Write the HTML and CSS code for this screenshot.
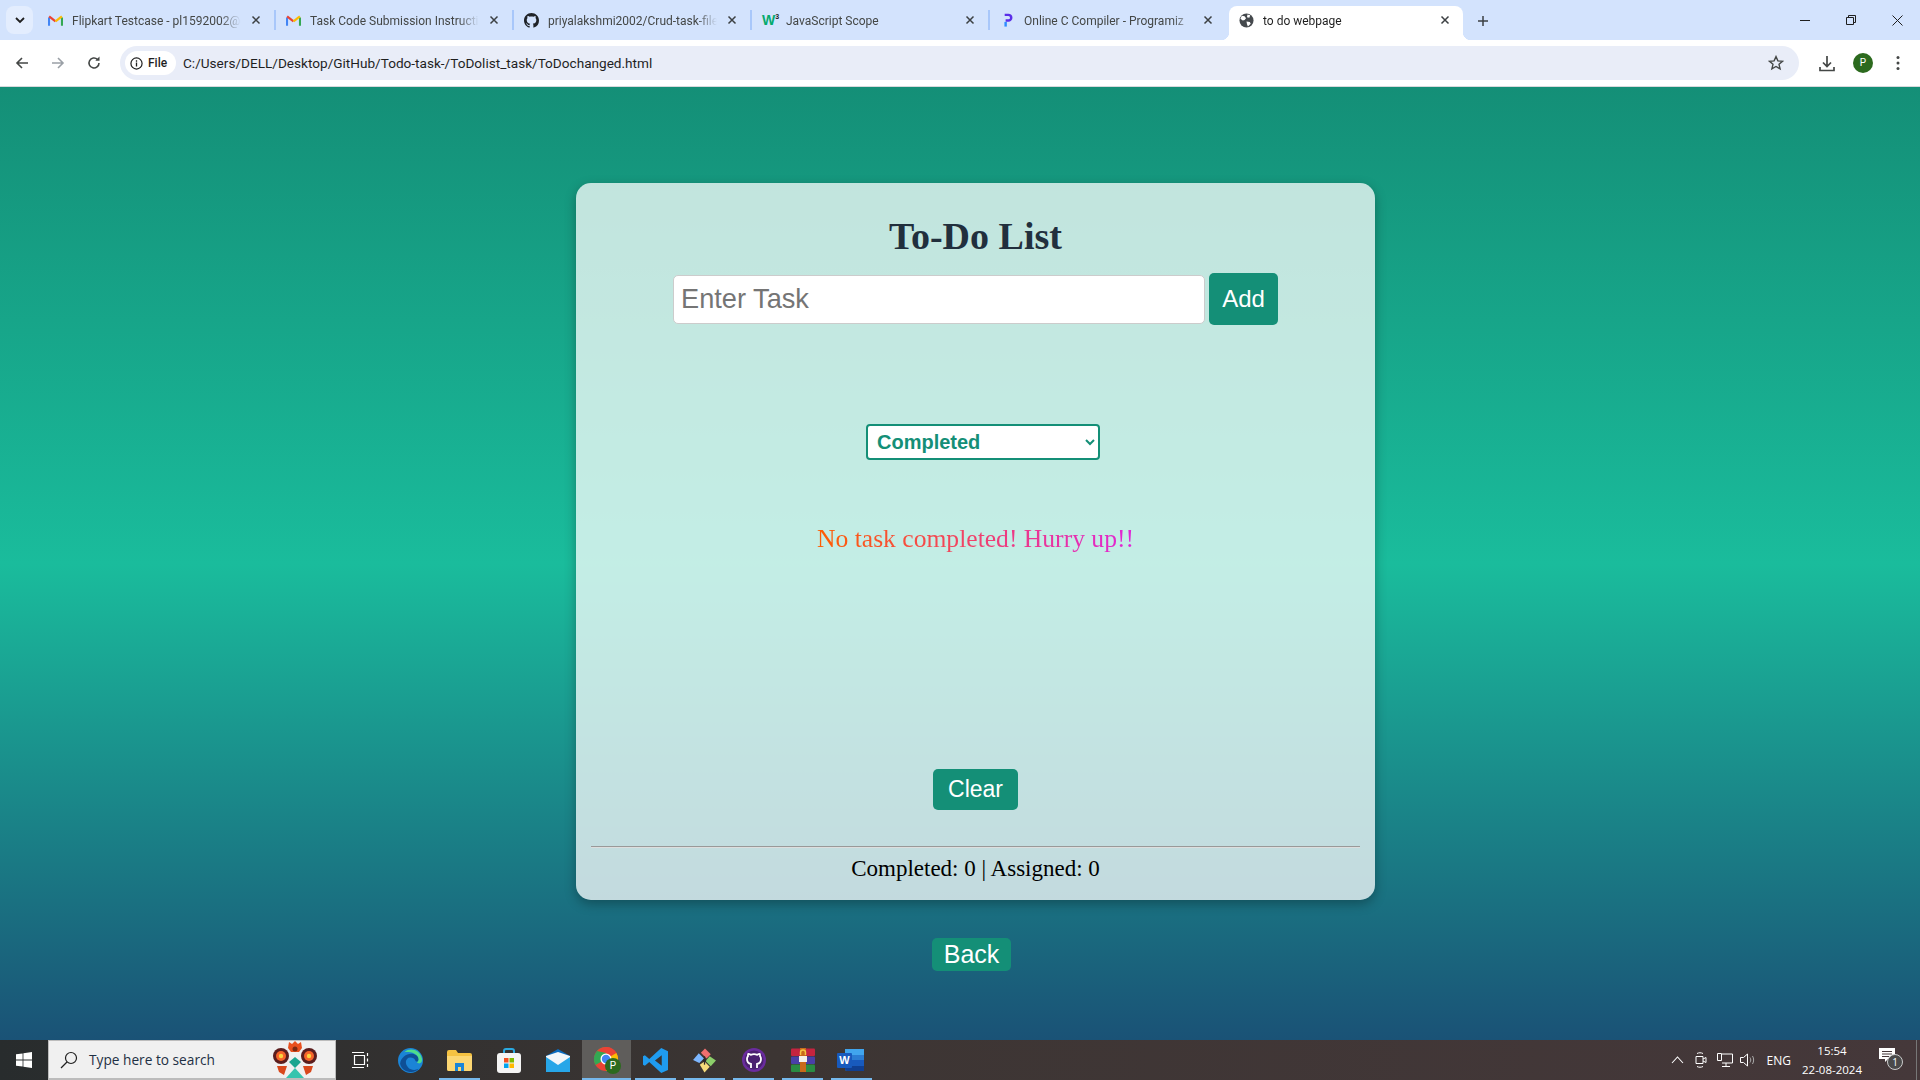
FILE: index.html
```html
<!DOCTYPE html>
<html lang="en">
<head>
  <meta charset="UTF-8" />
  <title>to do webpage</title>
  <link rel="stylesheet" href="styles.css">
</head>
<body>
  <svg class="defs" aria-hidden="true">
    <symbol id="close" viewBox="0 0 10 10"><path d="M1.5 1.5l7 7M8.5 1.5l-7 7" stroke="#3c4043" stroke-width="1.5" fill="none"/></symbol>
    <symbol id="gmail" viewBox="0 0 16 13">
      <path d="M1 12V3.2" stroke="#4285f4" stroke-width="2.4" fill="none"/>
      <path d="M15 12V3.2" stroke="#34a853" stroke-width="2.4" fill="none"/>
      <path d="M1.2 2.2L8 7.4" stroke="#ea4335" stroke-width="2.4" fill="none"/>
      <path d="M14.8 2.2L8 7.4" stroke="#fbbc04" stroke-width="2.4" fill="none"/>
    </symbol>
  </svg>

  <div class="tabstrip">
    <div class="tab-search">
      <svg width="10" height="7" viewBox="0 0 10 7"><path d="M1 1l4 4 4-4" stroke="#1f1f1f" stroke-width="1.8" fill="none"/></svg>
    </div>
    <div class="tab">
      <svg class="favicon" viewBox="0 0 16 13"><use href="#gmail"/></svg>
      <span class="tab-title">Flipkart Testcase - pl1592002@g</span>
      <svg class="tab-close" viewBox="0 0 10 10"><use href="#close"/></svg>
    </div>
    <div class="tab-sep"></div>
    <div class="tab">
      <svg class="favicon" viewBox="0 0 16 13"><use href="#gmail"/></svg>
      <span class="tab-title">Task Code Submission Instructio</span>
      <svg class="tab-close" viewBox="0 0 10 10"><use href="#close"/></svg>
    </div>
    <div class="tab-sep"></div>
    <div class="tab">
      <svg class="favicon" viewBox="0 0 16 16"><path fill="#1f2328" d="M8 0C3.58 0 0 3.58 0 8c0 3.54 2.29 6.53 5.47 7.59.4.07.55-.17.55-.38 0-.19-.01-.82-.01-1.49-2.01.37-2.53-.49-2.69-.94-.09-.23-.48-.94-.82-1.13-.28-.15-.68-.52-.01-.53.63-.01 1.08.58 1.23.82.72 1.21 1.87.87 2.33.66.07-.52.28-.87.51-1.07-1.78-.2-3.64-.89-3.64-3.95 0-.87.31-1.59.82-2.15-.08-.2-.36-1.02.08-2.12 0 0 .67-.21 2.2.82.64-.18 1.32-.27 2-.27s1.36.09 2 .27c1.53-1.04 2.2-.82 2.2-.82.44 1.1.16 1.92.08 2.12.51.56.82 1.27.82 2.15 0 3.07-1.87 3.75-3.65 3.95.29.25.54.73.54 1.48 0 1.07-.01 1.93-.01 2.2 0 .21.15.46.55.38A8.01 8.01 0 0016 8c0-4.42-3.58-8-8-8z"/></svg>
      <span class="tab-title">priyalakshmi2002/Crud-task-file</span>
      <svg class="tab-close" viewBox="0 0 10 10"><use href="#close"/></svg>
    </div>
    <div class="tab-sep"></div>
    <div class="tab">
      <span class="favicon w3-icon">W<sup>3</sup></span>
      <span class="tab-title">JavaScript Scope</span>
      <svg class="tab-close" viewBox="0 0 10 10"><use href="#close"/></svg>
    </div>
    <div class="tab-sep"></div>
    <div class="tab">
      <svg class="favicon" viewBox="0 0 16 16"><path d="M5 2h4a3 3 0 010 6H6" stroke="#5b2ee8" stroke-width="2.6" fill="none"/><path d="M6 9.5v5" stroke="#2f8cff" stroke-width="2.6"/></svg>
      <span class="tab-title">Online C Compiler - Programiz</span>
      <svg class="tab-close" viewBox="0 0 10 10"><use href="#close"/></svg>
    </div>
    <div class="tab tab-active">
      <svg class="favicon" viewBox="0 0 16 16"><circle cx="8" cy="8" r="7.5" fill="#45494d"/><path d="M3 3l3 .5 1.5 2L6 7.5l-2 .5-2.5-2zM9 1.5l3 1-1 2.5-2.5-.5zM8 9l3.5.5 1 2-3 3-1-2.5z" fill="#fff"/></svg>
      <span class="tab-title">to do webpage</span>
      <svg class="tab-close" viewBox="0 0 10 10"><use href="#close"/></svg>
    </div>
    <div class="new-tab">
      <svg width="12" height="12" viewBox="0 0 12 12"><path d="M6 1v10M1 6h10" stroke="#3c4043" stroke-width="1.5"/></svg>
    </div>
    <div class="window-controls">
      <svg width="10" height="10" viewBox="0 0 10 10"><path d="M0 5.5h10" stroke="#1f1f1f"/></svg>
      <svg width="10" height="10" viewBox="0 0 10 10"><path d="M.5 2.5h7v7h-7zM2.5 2.5v-2h7v7h-2" stroke="#1f1f1f" fill="none"/></svg>
      <svg width="11" height="11" viewBox="0 0 11 11"><path d="M.5.5l10 10M10.5.5l-10 10" stroke="#1f1f1f"/></svg>
    </div>
  </div>

  <div class="toolbar">
    <svg class="tool-icon" viewBox="0 0 16 16"><path d="M14 8H3M8 3L3 8l5 5" stroke="#444746" stroke-width="1.6" fill="none"/></svg>
    <svg class="tool-icon" viewBox="0 0 16 16"><path d="M2 8h11M8 3l5 5-5 5" stroke="#9aa0a6" stroke-width="1.6" fill="none"/></svg>
    <svg class="tool-icon" viewBox="0 0 16 16"><path d="M13 8a5 5 0 11-1.6-3.7" stroke="#444746" stroke-width="1.6" fill="none"/><path d="M13.5 1.5v4.2H9.3z" fill="#444746"/></svg>
    <div class="omnibox">
      <div class="file-chip">
        <svg width="13" height="13" viewBox="0 0 14 14"><circle cx="7" cy="7" r="6" stroke="#1f1f1f" stroke-width="1.3" fill="none"/><path d="M7 6v4.2M7 3.6v1.4" stroke="#1f1f1f" stroke-width="1.4"/></svg>
        <span>File</span>
      </div>
      <span class="url">C:/Users/DELL/Desktop/GitHub/Todo-task-/ToDolist_task/ToDochanged.html</span>
      <svg class="star" width="16" height="16" viewBox="0 0 16 16"><path d="M8 1.6l1.9 4.3 4.6.4-3.5 3 1.1 4.6L8 11.5l-4.1 2.4L5 9.3l-3.5-3 4.6-.4z" stroke="#444746" stroke-width="1.4" fill="none"/></svg>
    </div>
    <div class="toolbar-right">
      <svg width="16" height="17" viewBox="0 0 16 17"><path d="M8 1v10M4 7.5L8 11.500l4-4M1 12v3.500h14V12" stroke="#444746" stroke-width="1.700" fill="none"/></svg>
      <span class="avatar">P</span>
      <svg width="4" height="16" viewBox="0 0 4 16"><circle cx="2" cy="2.500" r="1.500" fill="#444746"/><circle cx="2" cy="8" r="1.500" fill="#444746"/><circle cx="2" cy="13.500" r="1.500" fill="#444746"/></svg>
    </div>
  </div>

  <main class="page">
    <section class="todo-card">
      <h1 class="todo-title">To-Do List</h1>
      <div class="input-row">
        <input class="task-input" type="text" placeholder="Enter Task">
        <button class="btn btn-add">Add</button>
      </div>
      <select class="filter">
        <option>Completed</option>
        <option>Assigned</option>
      </select>
      <p class="empty-msg"><span>No task completed! Hurry up!!</span></p>
      <button class="btn btn-clear">Clear</button>
      <hr class="divider">
      <p class="stats">Completed: 0 | Assigned: 0</p>
    </section>
    <button class="btn btn-back">Back</button>
  </main>

  <footer class="taskbar">
    <div class="start">
      <svg width="16" height="16" viewBox="0 0 16 16"><path fill="#fff" d="M0 2.300l6.600-.9v6.200H0zM7.400 1.300L16 0v7.600H7.400zM0 8.400h6.600v6.200L0 13.700zM7.400 8.400H16V16l-8.600-1.300z"/></svg>
    </div>
    <div class="search-box">
      <svg width="18" height="18" viewBox="0 0 18 18"><circle cx="11" cy="7" r="5.500" stroke="#1f1f1f" stroke-width="1.200" fill="none"/><path d="M7 11l-6 6" stroke="#1f1f1f" stroke-width="1.300"/></svg>
      <span class="search-text">Type here to search</span>
      <svg class="doodle" width="46" height="38" viewBox="0 0 46 38">
        <circle cx="9" cy="15" r="8" fill="#5b1d1d"/><circle cx="9" cy="15" r="5" fill="#f6642a"/><circle cx="9" cy="15" r="2.200" fill="#fbd33e"/>
        <circle cx="37" cy="15" r="8" fill="#5b1d1d"/><circle cx="37" cy="15" r="5" fill="#f6642a"/><circle cx="37" cy="15" r="2.200" fill="#fbd33e"/>
        <path d="M17 1l3 2 3-3 3 3 3-2 1 6-3 4h-8l-3-4z" fill="#e8501e"/><circle cx="23" cy="8" r="2.500" fill="#7a2a14"/>
        <path d="M23 16l6 5-6 6-6-6z" fill="#1aa58f"/><path d="M23 27l9 10H14z" fill="#35c4ae"/>
        <path d="M5 25h10l-3 9-5-3zM41 25H31l3 9 5-3z" fill="#d9481c"/>
      </svg>
    </div>
    <div class="task-item">
      <svg class="task-view" width="18" height="16" viewBox="0 0 18 16"><path d="M3.500 3.500h10v9h-10zM1 .5h12M1 15.500h12M16.500 1v3M16.500 6.500v3M16.500 12v3" stroke="#fff" stroke-width="1.200" fill="none"/></svg>
    </div>
    <div class="task-item">
      <svg width="25" height="25" viewBox="0 0 24 24"><circle cx="12" cy="12" r="12" fill="#1b84d6"/><path d="M2 15C3 7 12 3 18 7c3 2 3 6 0 6-2 0-1-4-6-4-5 0-6 6-2 10 2 2 6 3 10 1-4 5-16 4-18-5z" fill="#0e4f96"/><path d="M6 4c6-5 15-2 17 6 .8 4-2 6-5 4 3-2 2-7-3-9-4-1.500-7-1-9-1z" fill="#4fdc8c"/></svg>
    </div>
    <div class="task-item running">
      <svg width="25" height="22" viewBox="0 0 25 22"><path d="M0 3a2 2 0 012-2h7l2 3h12a2 2 0 012 2v14a2 2 0 01-2 2H2a2 2 0 01-2-2z" fill="#f5c242"/><path d="M0 7h25v13a2 2 0 01-2 2H2a2 2 0 01-2-2z" fill="#fcd773"/><path d="M8 22v-8h9v8h-3v-4h-3v4z" fill="#1a86d8"/></svg>
    </div>
    <div class="task-item">
      <svg width="24" height="25" viewBox="0 0 24 25"><path d="M7 7V3a2 2 0 012-2h6a2 2 0 012 2v4" stroke="#2aa9e0" stroke-width="2" fill="none"/><rect y="5" width="24" height="20" rx="3" fill="#f4f4f4"/><rect x="7" y="10" width="4.500" height="4.500" fill="#f25022"/><rect x="12.500" y="10" width="4.500" height="4.500" fill="#7fba00"/><rect x="7" y="15.500" width="4.500" height="4.500" fill="#00a4ef"/><rect x="12.500" y="15.500" width="4.500" height="4.500" fill="#ffb900"/></svg>
    </div>
    <div class="task-item">
      <svg width="24" height="23" viewBox="0 0 24 23"><path d="M12 0l12 7v16H0V7z" fill="#0a6cc0"/><path d="M0 8h24v15H0z" fill="#27a6e8"/><path d="M0 8l12 8 12-8v-1L12 3 0 7z" fill="#f2f6fa"/></svg>
    </div>
    <div class="task-item active">
      <svg width="26" height="26" viewBox="0 0 26 26"><circle cx="12" cy="12" r="12" fill="#ea4335"/><path d="M12 12L1.600 18A12 12 0 0112 0z" fill="#34a853"/><path d="M12 12l10.400-6A12 12 0 0112 24z" fill="#fbbc04"/><path d="M12 6h10.400A12 12 0 003 4z" fill="#ea4335"/><circle cx="12" cy="12" r="5.500" fill="#fff"/><circle cx="12" cy="12" r="4.200" fill="#4285f4"/></svg>
      <span class="profile-badge">P</span>
    </div>
    <div class="task-item running">
      <svg width="25" height="25" viewBox="0 0 24 24"><path d="M17.500 0L24 3v18l-6.500 3L6 13.500 1.800 17 0 16V8l1.800-1L6 10.500zM18 7l-6.500 5 6.500 5z" fill="#1f9cf0"/></svg>
    </div>
    <div class="task-item running">
      <svg width="25" height="25" viewBox="0 0 24 24"><path d="M12.500 .5l5.500 5.500-4 4-5.500-5.500z" fill="#ef6f6f"/><path d="M6.500 5l5 5-4.500 4.500L1 11.500z" fill="#7db7ff"/><path d="M17 8l6 4-5 5.500-5-5z" fill="#8ccf6a"/><path d="M7.500 16l4.500-3 5 5-5 5.500z" fill="#f6dc7b"/><circle cx="12" cy="12" r="1.600" fill="#2f2a28"/><path d="M12 8v8" stroke="#2f2a28" stroke-width="1.200"/></svg>
    </div>
    <div class="task-item running">
      <svg width="24" height="24" viewBox="0 0 24 24"><circle cx="12" cy="12" r="12" fill="#6a2c9e"/><circle cx="12" cy="12" r="9.500" fill="#4a2070"/><path d="M9 20v-4c-2.500-.5-4-2-4-5 0-1 .3-2 1-2.800-.2-.8 0-1.800.3-2.400.9 0 1.700.5 2.400 1a9 9 0 016.600 0c.7-.5 1.500-1 2.400-1 .3.600.5 1.600.3 2.400.7.800 1 1.800 1 2.800 0 3-1.500 4.500-4 5v4" stroke="#fff" stroke-width="1.800" fill="none"/></svg>
    </div>
    <div class="task-item running">
      <svg width="24" height="24" viewBox="0 0 24 24"><rect width="24" height="7.500" y=".5" rx="1" fill="#c5243f"/><rect width="24" height="7.500" y="8.500" rx="1" fill="#4a3fa8"/><rect width="24" height="7.500" y="16.500" rx="1" fill="#2a8c43"/><rect x="9" y="0" width="6" height="24" fill="#c86a1a"/><rect x="8" y="8" width="8" height="6" fill="#f6f1e6"/><path d="M9.500 7V4.500a2.500 2.500 0 015 0V7" stroke="#f5c242" stroke-width="1.500" fill="none"/></svg>
    </div>
    <div class="task-item running">
      <svg width="25" height="22" viewBox="0 0 25 22"><path d="M6 2a2 2 0 012-2h17v22H8a2 2 0 01-2-2z" fill="#2b7cd3"/><path d="M6 0h19v6H6z" fill="#41a5ee"/><path d="M6 11h19v6H6z" fill="#185abd"/><path d="M6 17h19v5H8a2 2 0 01-2-2z" fill="#103f91"/></svg>
      <span class="word-letter">W</span>
    </div>

    <div class="tray">
      <svg class="tray-chevron" width="13" height="8" viewBox="0 0 13 8"><path d="M1 7l5.500-6L12 7" stroke="#fff" stroke-width="1.100" fill="none"/></svg>
      <svg class="tray-cam" width="12" height="16" viewBox="0 0 12 16"><path d="M1 4.500h7v7H1zM8 7l3-1.500v5L8 9M2 1.500c2-1 4-1 6 0M2 14.500c2 1 4 1 6 0" stroke="#fff" fill="none"/></svg>
      <svg class="tray-net" width="16" height="14" viewBox="0 0 16 14"><path d="M5 1h10.500v9H5M.5.500h4v7h-4zM9 10v3M5 13.500h8" stroke="#fff" fill="none"/></svg>
      <svg class="tray-vol" width="16" height="14" viewBox="0 0 16 14"><path d="M.5 4.500h3l4-3.500v12l-4-3.500h-3z" stroke="#fff" fill="none"/><path d="M10 4.500c1 1.500 1 3.500 0 5M12.500 3c1.500 2.500 1.500 5.500 0 8" stroke="#aaa" fill="none"/></svg>
      <span class="tray-lang">ENG</span>
      <div class="clock"><span>15:54</span><span>22-08-2024</span></div>
      <div class="notify">
        <svg width="16" height="15" viewBox="0 0 16 15"><path d="M0 0h16v11H9l-3 3v-3H0z" fill="#fff"/><path d="M3 3.500h10M3 6h10M3 8.500h7" stroke="#45383a"/></svg>
        <span class="notify-count">1</span>
      </div>
      <div class="show-desktop"></div>
    </div>
  </footer>
</body>
</html>
```

FILE: styles.css
```css
* {
  box-sizing: border-box;
}
html, body {
  height: 100%;
}
body {
  margin: 0;
  display: flex;
  flex-direction: column;
  overflow: hidden;
  font-family: "Liberation Serif", serif;
}
.defs {
  display: none;
}

/* browser chrome */
.tabstrip {
  height: 40px;
  flex: none;
  display: flex;
  align-items: flex-end;
  background: #d3e3fd;
  font-family: Roboto, sans-serif;
  padding-left: 6px;
  color: #444746;
}
.tab-search {
  width: 27px;
  height: 28px;
  margin: 0 5px 6px 0;
  border-radius: 8px;
  background: #e3edfe;
  display: flex;
  align-items: center;
  justify-content: center;
}
.tab {
  width: 236px;
  height: 34px;
  padding: 0 10px 6px 10px;
  display: flex;
  align-items: center;
  position: relative;
}
.tab-sep {
  width: 2px;
  height: 20px;
  margin-bottom: 10px;
  background: #a8c7fa;
}
.favicon {
  width: 15px;
  height: 15px;
  flex: none;
  margin-right: 9px;
}
.w3-icon {
  font: bold 14px/15px "Liberation Sans", sans-serif;
  color: #04aa6d;
  white-space: nowrap;
}
.w3-icon sup {
  font-size: 7px;
  line-height: 0;
  color: #1f1f1f;
}
.tab-title {
  flex: 1;
  font-size: 12px;
  padding-top: 2px;
  white-space: nowrap;
  overflow: hidden;
  mask-image: linear-gradient(to right, #000 88%, transparent 100%);
}
.tab-close {
  width: 10px;
  height: 10px;
  flex: none;
  margin: 0 3px 0 10px;
}
.tab-active {
  width: 234px;
  margin-left: 3px;
  background: #fff;
  border-radius: 8px 8px 0 0;
  color: #1f1f1f;
}
/* concave corners either side of the open tab */
.tab-active::before,
.tab-active::after {
  content: "";
  position: absolute;
  bottom: 0;
  width: 8px;
  height: 8px;
}
.tab-active::before {
  left: -8px;
  background: radial-gradient(circle at 0 0, transparent 8px, #fff 8.5px);
}
.tab-active::after {
  right: -8px;
  background: radial-gradient(circle at 100% 0, transparent 8px, #fff 8.5px);
}
.new-tab {
  width: 12px;
  height: 12px;
  margin: 0 0 13px 14px;
  display: flex;
}
.window-controls {
  margin-left: auto;
  align-self: stretch;
  width: 137px;
  padding: 15px 17px 0 17px;
  display: flex;
  justify-content: space-between;
  align-items: flex-start;
}
.toolbar {
  height: 47px;
  flex: none;
  display: flex;
  align-items: center;
  gap: 20px;
  padding: 0 13px 0 14px;
  background: #fff;
  border-radius: 8px 8px 0 0;
  border-bottom: 1px solid #d7d9dc;
}
.tool-icon {
  width: 16px;
  height: 16px;
  flex: none;
}
.omnibox {
  width: 1679px;
  height: 34px;
  margin-left: -2px;
  flex: none;
  border-radius: 17px;
  background: #e9edf8;
  display: flex;
  align-items: center;
  padding: 0 15px 0 5px;
  font-family: Roboto, sans-serif;
  color: #1f1f1f;
}
.file-chip {
  width: 51px;
  height: 24px;
  border-radius: 12px;
  background: #fff;
  display: flex;
  align-items: center;
  gap: 5px;
  padding-left: 5px;
  font-size: 12px;
  font-weight: 500;
}
.url {
  font-size: 13.600px;
  margin-left: 7px;
}
.star {
  margin-left: auto;
}
.toolbar-right {
  display: flex;
  align-items: center;
  margin-left: 0;
  gap: 18px;
}
.avatar {
  width: 20px;
  height: 20px;
  margin-right: 5px;
  border-radius: 50%;
  background: #2c6a1e;
  color: #fff;
  font: 10px/20px Roboto, sans-serif;
  text-align: center;
}

/* the to-do page */
.page {
  flex: 1;
  min-height: 0;
  display: flex;
  flex-direction: column;
  align-items: flex-start;
  background: linear-gradient(#148f77, #1abc9c, #1a5276);
}
.todo-card {
  width: 799px;
  height: 717px;
  margin: 96px 0 0 576px;
  padding: 31px 15px 0;
  display: flex;
  flex-direction: column;
  align-items: center;
  background: rgba(255, 255, 255, 0.74);
  border-radius: 15px;
  box-shadow: 0 4px 12px rgba(0, 0, 0, 0.3);
}
.todo-title {
  margin: 0;
  font-size: 38px;
  line-height: 44px;
  font-weight: bold;
  color: #212f3d;
}
.input-row {
  margin-top: 15px;
  display: flex;
  align-items: center;
  gap: 4px;
}
.task-input {
  width: 532px;
  height: 49px;
  padding: 0 7px;
  border: 1px solid #ccc;
  border-radius: 5px;
  background: #fff;
  font: 27.200px "Liberation Sans", sans-serif;
}
.btn {
  border: none;
  background: #148f77;
  color: #fff;
  font-family: "Liberation Sans", sans-serif;
  font-size: 24px;
  border-radius: 5px;
  padding: 0;
}
.btn-add {
  width: 69px;
  height: 52px;
}
.filter {
  width: 234px;
  height: 36px;
  margin: 99px 0 0 15px;
  padding-left: 5px;
  border: 2px solid #148f77;
  border-radius: 4px;
  background: #fff;
  color: #148f77;
  font: bold 20px "Liberation Sans", sans-serif;
}
.empty-msg {
  margin: 61px 0 0;
  font-size: 25.600px;
  line-height: 36px;
}
.empty-msg span {
  display: inline-block;
  background: linear-gradient(90deg, #ff5e00, #e024d8);
  -webkit-background-clip: text;
  background-clip: text;
  color: transparent;
}
.btn-clear {
  width: 85px;
  height: 41px;
  margin-top: 212px;
  font-size: 23px;
}
.divider {
  width: 100%;
  margin: 36px 0 0;
  border: none;
  border-top: 1px solid #999;
  border-bottom: 1px solid #ddd;
}
.stats {
  margin: 7px 0 0;
  font-size: 23px;
  line-height: 28px;
  color: #000;
}
.btn-back {
  width: 79px;
  height: 33px;
  margin: 38px 0 0 932px;
  font-size: 25px;
}

/* windows taskbar */
.taskbar {
  height: 40px;
  flex: none;
  display: flex;
  align-items: stretch;
  background: linear-gradient(90deg, #282c2d, #3c3533 40%, #45383a);
  font-family: "Open Sans", sans-serif;
}
.start {
  width: 48px;
  display: flex;
  align-items: center;
  justify-content: center;
}
.search-box {
  width: 288px;
  margin-right: 1px;
  padding-left: 11px;
  display: flex;
  align-items: center;
  background: #f0f0f0;
  border: 1px solid #bcbcbc;
  border-bottom-width: 2px;
}
.search-text {
  margin-left: 11px;
  font-size: 13.700px;
  color: #1f3044;
}
.doodle {
  margin-left: auto;
  margin-right: 17px;
}
.task-item {
  width: 49px;
  display: flex;
  align-items: center;
  justify-content: center;
  position: relative;
}
.task-view {
  margin-right: 4px;
}
.running::after,
.active::after {
  content: "";
  position: absolute;
  left: 4px;
  right: 4px;
  bottom: 0;
  height: 2px;
  background: #76b9ed;
}
.active {
  background: #5f5d5b;
}
.active::after {
  left: 0;
  right: 0;
}
.profile-badge {
  position: absolute;
  left: 23px;
  top: 18px;
  width: 16px;
  height: 16px;
  border-radius: 50%;
  background: #2c6a1e;
  color: #fff;
  font: 10px/16px Roboto, sans-serif;
  text-align: center;
}
.word-letter {
  position: absolute;
  left: 10px;
  top: 13px;
  width: 15px;
  height: 15px;
  border-radius: 1px;
  background: #185abd;
  color: #fff;
  font: bold 11px/15px "Liberation Sans", sans-serif;
  text-align: center;
}
.tray {
  margin-left: auto;
  display: flex;
  align-items: center;
  color: #fff;
  font-size: 12px;
}
.tray-cam {
  margin-left: 11px;
}
.tray-net {
  margin-left: 10px;
}
.tray-vol {
  margin-left: 7px;
}
.tray-lang {
  margin-left: 11px;
}
.clock {
  width: 60px;
  margin-left: 11px;
  display: flex;
  flex-direction: column;
  align-items: center;
  font-size: 11.500px;
  line-height: 19px;
  white-space: nowrap;
}
.notify {
  width: 24px;
  height: 24px;
  margin-left: 17px;
  position: relative;
}
.notify-count {
  position: absolute;
  left: 8px;
  top: 6px;
  width: 16px;
  height: 16px;
  border-radius: 50%;
  background: #4a4a4a;
  border: 1px solid #ccc;
  font: 10px/14px "Open Sans", sans-serif;
  text-align: center;
}
.show-desktop {
  width: 1px;
  align-self: stretch;
  margin: 0 3px 0 13px;
  background: #777;
}
```
